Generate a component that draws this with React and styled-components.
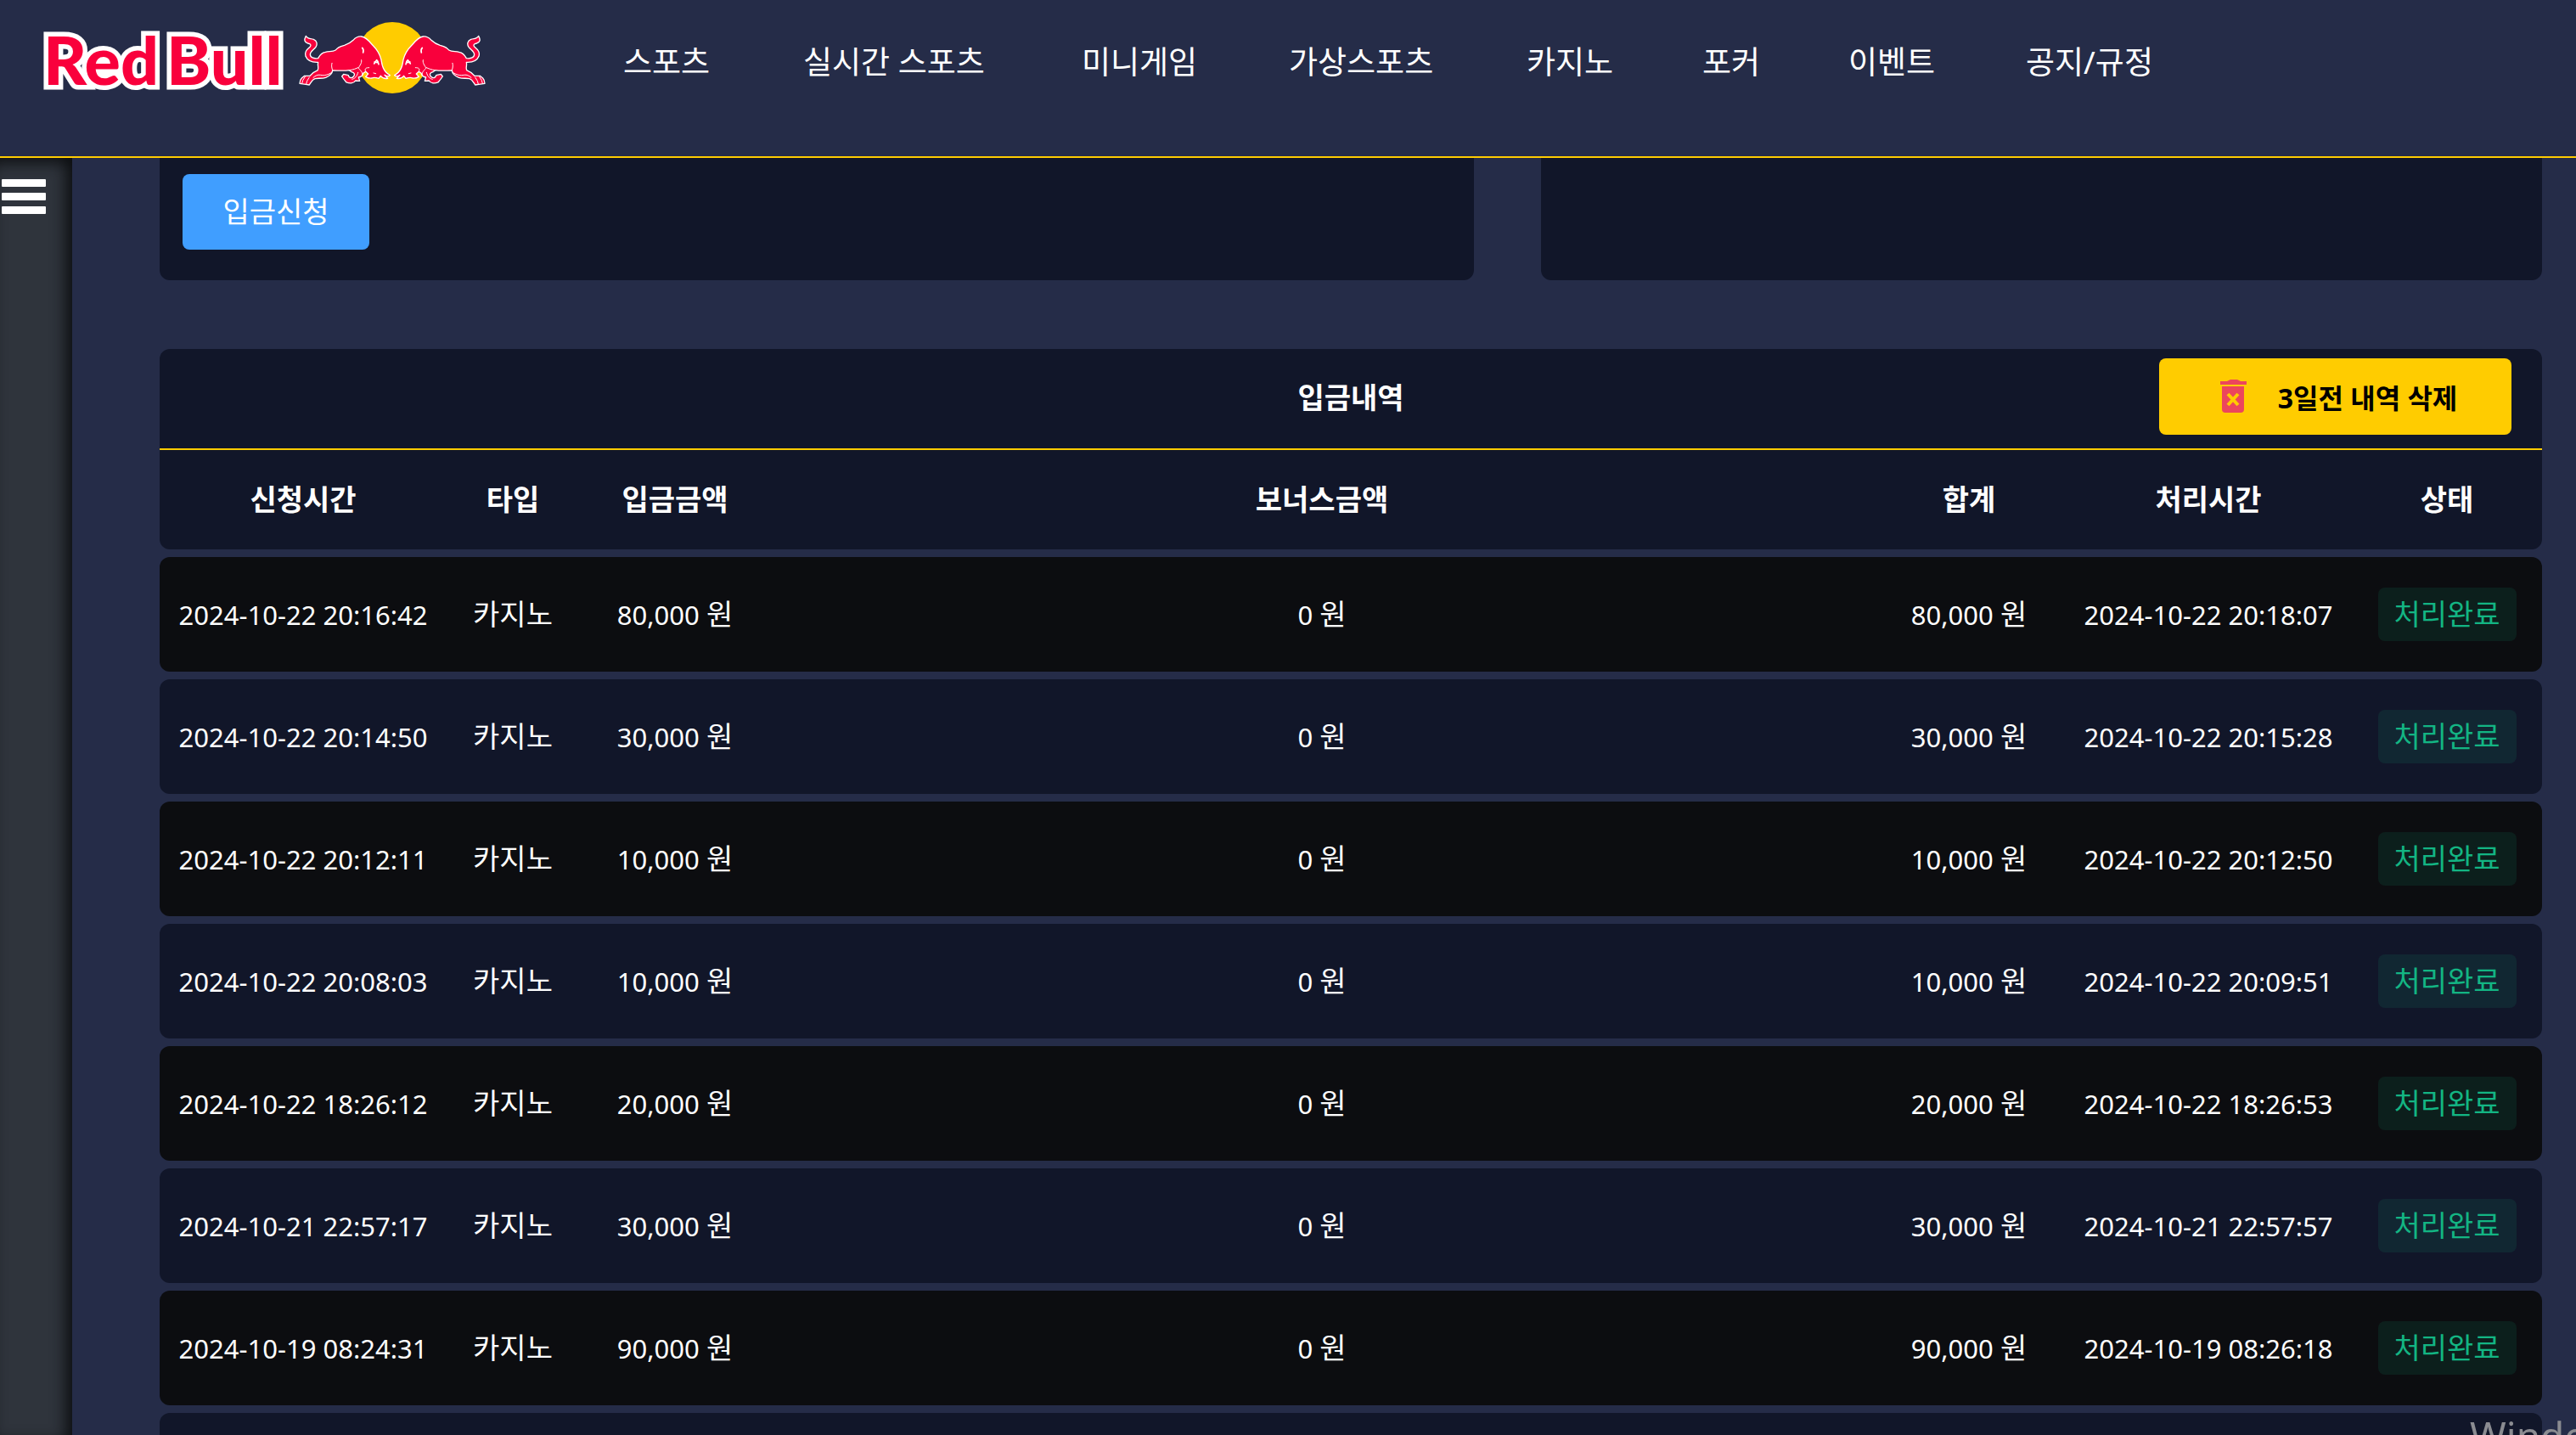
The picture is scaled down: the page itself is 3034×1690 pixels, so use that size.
// --------------------------------------
// Imports
// --------------------------------------
import React from 'react';
import styled, { createGlobalStyle } from 'styled-components';

// --------------------------------------
// Data
// --------------------------------------
const menu = ['스포츠', '실시간 스포츠', '미니게임', '가상스포츠', '카지노', '포커', '이벤트', '공지/규정'];

const columns = ['신청시간', '타입', '입금금액', '보너스금액', '합계', '처리시간', '상태'];

const deposits = [
    { asked: '2024-10-22 20:16:42', amount: '80,000', done: '2024-10-22 20:18:07' },
    { asked: '2024-10-22 20:14:50', amount: '30,000', done: '2024-10-22 20:15:28' },
    { asked: '2024-10-22 20:12:11', amount: '10,000', done: '2024-10-22 20:12:50' },
    { asked: '2024-10-22 20:08:03', amount: '10,000', done: '2024-10-22 20:09:51' },
    { asked: '2024-10-22 18:26:12', amount: '20,000', done: '2024-10-22 18:26:53' },
    { asked: '2024-10-21 22:57:17', amount: '30,000', done: '2024-10-21 22:57:57' },
    { asked: '2024-10-19 08:24:31', amount: '90,000', done: '2024-10-19 08:26:18' },
];

// --------------------------------------
// Logo
// --------------------------------------
const Bull = () => (
    <g stroke="#fff" strokeWidth="4" strokeLinejoin="round" strokeLinecap="round">
        <path
            fill="#f9003c"
            d="M61 97 C65 108 76 105 88 109 C101 114 102 127 96 136 C89 146 77 151 76 162 C76 173 88 178 104 176
            C110 164 117 156 130 154 C141 150 154 154 166 147 C174 135 185 133 197 130 C210 126 219 121 228 112
            C237 102 247 98 257 99 C274 101 285 116 297 130 C312 145 322 161 327 181 C329 193 330 203 335 212
            C341 224 350 232 358 236 C352 241 345 239 339 235 L350 247 C340 249 331 246 325 238
            L318 247 C309 244 301 242 294 246 C284 248 277 244 272 241 L281 231 L272 223 L264 228
            C261 239 256 242 247 243 L251 256 L236 255 C230 266 214 265 204 261 C198 254 193 248 188 240 L194 232
            L211 236 C212 245 222 248 229 241 C236 232 232 227 222 224 L214 218 C195 221 174 219 155 219
            C154 231 145 238 131 244 C117 249 105 245 93 248 C83 251 80 260 73 270 L60 268 L39 265
            C39 257 42 250 46 246 L56 238 L75 238 C82 229 92 223 102 219 C108 211 101 203 104 190
            C84 191 66 184 60 169 C55 152 65 145 76 135 C80 129 78 125 68 123 C56 119 53 112 61 97 Z"
        />
        <path fill="none" strokeWidth="5" d="M260 139 C265 144 265 149 263 156" />
        <path fill="none" strokeWidth="5" d="M302 195 C305 190 308 186 311 182 C316 186 318 191 318 197 M303 189 L313 191" />
        <path fill="none" strokeWidth="3" d="M257 182 C260 194 249 203 247 211 C255 221 263 225 260 239 M272 223 C267 212 273 209 284 209 M300 228 L308 230" />
        <path fill="none" strokeWidth="3" d="M153 193 C150 203 153 211 155 219 M153 225 C140 235 125 238 112 235 C102 233 94 238 87 244 M215 218 C227 217 239 212 245 209" />
        <path fill="none" strokeWidth="3" d="M58 241 L50 254 L47 265 M73 243 L65 256 L62 267 M245 226 C242 239 233 249 224 250" />
    </g>
);

const Logo = () => (
    <svg width="540" height="100" viewBox="0 0 540 100" role="img" aria-label="Red Bull">
        <g
            fill="#f9003c"
            stroke="#fff"
            strokeWidth="11"
            paintOrder="stroke"
            fontFamily="Lato, sans-serif"
            fontWeight="900"
            fontSize="79"
        >
            <text x="1" y="80">Red</text>
            <text x="146" y="80">Bull</text>
        </g>
        <g transform="translate(290 -10) scale(0.3333)">
            <circle cx="366" cy="174" r="126" fill="#ffcc00" />
            <Bull />
            <g transform="translate(732 0) scale(-1 1)">
                <Bull />
            </g>
        </g>
    </svg>
);

const TrashIcon = () => (
    <svg width="32" height="39" viewBox="0 0 32 39" aria-hidden="true">
        <path fill="#ec465c" d="M8 2 L12 0 H20 L24 2 H31 V6 H0 V2 Z" />
        <path fill="#ec465c" d="M2 8 H28 V35 Q28 39 24 39 H6 Q2 39 2 35 Z" />
        <path stroke="#ffcc00" strokeWidth="4" fill="none" d="M9 17 L21 30 M21 17 L9 30" />
    </svg>
);

// --------------------------------------
// Create Component
// --------------------------------------
const App = () => {
    return (
        <Page>
            <GlobalStyle />
            <Header>
                <LogoLink href="#home"><Logo /></LogoLink>
                <Nav>
                    {menu.map((item) => (
                        <NavLink href="#menu" key={item}>{item}</NavLink>
                    ))}
                </Nav>
            </Header>

            <Body>
                <Sidebar>
                    <MenuButton type="button" aria-label="메뉴">
                        <svg width="52" height="41" viewBox="0 0 52 41" fill="#fff" aria-hidden="true">
                            <rect width="52" height="9" rx="1" />
                            <rect y="16" width="52" height="9" rx="1" />
                            <rect y="32" width="52" height="9" rx="1" />
                        </svg>
                    </MenuButton>
                </Sidebar>

                <Main>
                    <Panels>
                        <Panel>
                            <DepositButton type="button">입금신청</DepositButton>
                        </Panel>
                        <Panel />
                    </Panels>

                    <TitleBar>
                        <Title>입금내역</Title>
                        <DeleteButton type="button">
                            <TrashIcon />
                            3일전 내역 삭제
                        </DeleteButton>
                    </TitleBar>

                    <Table>
                        <colgroup>
                            <Col $width="338px" />
                            <Col $width="156px" />
                            <Col $width="226px" />
                            <Col $width="auto" />
                            <Col $width="226px" />
                            <Col $width="338px" />
                            <Col $width="224px" />
                        </colgroup>
                        <thead>
                            <tr>
                                {columns.map((name) => (
                                    <HeadCell scope="col" key={name}>{name}</HeadCell>
                                ))}
                            </tr>
                        </thead>
                        <tbody>
                            {deposits.map((row) => (
                                <Row key={row.asked}>
                                    <Cell>{row.asked}</Cell>
                                    <Cell><Hangul>카지노</Hangul></Cell>
                                    <Cell>{row.amount} <Hangul>원</Hangul></Cell>
                                    <Cell>0 <Hangul>원</Hangul></Cell>
                                    <Cell>{row.amount} <Hangul>원</Hangul></Cell>
                                    <Cell>{row.done}</Cell>
                                    <Cell><Status>처리완료</Status></Cell>
                                </Row>
                            ))}
                            <Row>
                                <Cell colSpan={7} />
                            </Row>
                        </tbody>
                    </Table>
                </Main>
            </Body>

            <Watermark>Windows</Watermark>
        </Page>
    );
};

// --------------------------------------
// Styles
// --------------------------------------
const GlobalStyle = createGlobalStyle`
    * {
        box-sizing: border-box;
    }

    body {
        margin: 0;
        background: #252c48;
        color: #fff;
        font-family: 'Noto Sans', 'Noto Sans CJK KR', sans-serif;
    }

    button {
        border: none;
        font-family: inherit;
        cursor: pointer;
    }
`;

const Page = styled.div`
    height: 100vh;
    display: flex;
    flex-direction: column;
    overflow: hidden;
`;

const Header = styled.header`
    flex: none;
    display: flex;
    align-items: flex-start;
    height: 186px;
    padding: 20px 50px;
    border-bottom: 2px solid #ffcc00;
`;

const LogoLink = styled.a`
    flex: none;
    width: 684px;
    height: 100px;
    svg {
        display: block;
        overflow: visible;
    }
`;

const Nav = styled.nav`
    display: grid;
    grid-template-columns: 212px 328px 244px 280px 207px 172px 209px auto;
    line-height: 106px;
`;

const NavLink = styled.a`
    color: #fff;
    font-size: 37px;
    text-decoration: none;
    white-space: nowrap;
`;

const Body = styled.div`
    flex: 1;
    min-height: 0;
    display: flex;
`;

const Sidebar = styled.aside`
    flex: none;
    width: 85px;
    padding: 25px 2px;
    background: #2f343c;
    box-shadow: inset -9px 7px 18px -2px #0c0e10;
`;

const MenuButton = styled.button`
    display: block;
    padding: 0;
    background: none;
    svg {
        display: block;
    }
`;

const Main = styled.main`
    flex: 1;
    min-width: 0;
    padding: 0 40px 0 103px;
    overflow: hidden;
`;

const Panels = styled.div`
    display: grid;
    grid-template-columns: 1548fr 1179fr;
    gap: 79px;
    margin-bottom: 81px;
`;

const Panel = styled.section`
    height: 144px;
    padding: 19px 27px;
    background: #111629;
    border-radius: 0 0 12px 12px;
`;

const DepositButton = styled.button`
    width: 220px;
    height: 89px;
    padding: 0 0 4px;
    border-radius: 8px;
    background: #409eff;
    color: #fff;
    font-size: 34px;
`;

const TitleBar = styled.div`
    display: grid;
    grid-template-columns: 1fr auto 1fr;
    align-items: center;
    height: 119px;
    padding: 0 36px 6px;
    background: #111629;
    border-bottom: 2px solid #ffcc00;
    border-radius: 12px 12px 0 0;
`;

const Title = styled.h2`
    grid-column: 2;
    margin: 0;
    font-size: 34px;
    font-weight: 700;
`;

const DeleteButton = styled.button`
    display: flex;
    align-items: center;
    justify-content: center;
    gap: 36px;
    justify-self: end;
    width: 415px;
    height: 90px;
    padding: 0 0 0 8px;
    border-radius: 8px;
    background: #ffcc00;
    color: #000;
    font-size: 32px;
    font-weight: 700;
`;

const Table = styled.table`
    width: 100%;
    margin-top: -9px;
    table-layout: fixed;
    border-spacing: 0 9px;
    text-align: center;
    white-space: nowrap;
`;

const Col = styled.col`
    width: ${(props) => props.$width};
`;

const HeadCell = styled.th`
    height: 117px;
    padding: 0 0 4px;
    background: #111629;
    font-size: 34px;
    font-weight: 700;
    &:first-child {
        border-bottom-left-radius: 12px;
    }
    &:last-child {
        border-bottom-right-radius: 12px;
    }
`;

const Cell = styled.td`
    height: 135px;
    padding: 0;
    font-size: 31px;
    line-height: 48px;
    &:first-child {
        border-top-left-radius: 12px;
        border-bottom-left-radius: 12px;
    }
    &:last-child {
        border-top-right-radius: 12px;
        border-bottom-right-radius: 12px;
    }
`;

const Row = styled.tr`
    &:nth-child(odd) ${Cell} {
        background: #0c0d10;
    }
    &:nth-child(even) ${Cell} {
        background: #111629;
    }
`;

const Hangul = styled.span`
    font-size: 34px;
`;

const Status = styled.span`
    display: inline-block;
    width: 163px;
    border-radius: 8px;
    background: rgba(16, 185, 129, 0.11);
    color: #13b583;
    font-size: 34px;
    line-height: 63px;
`;

const Watermark = styled.div`
    position: fixed;
    right: 0;
    bottom: 0;
    width: 125px;
    height: 24px;
    overflow: hidden;
    color: #8b8c91;
    font-size: 46px;
    line-height: 48px;
`;

// --------------------------------------
// Export Component
// --------------------------------------
export default App;
